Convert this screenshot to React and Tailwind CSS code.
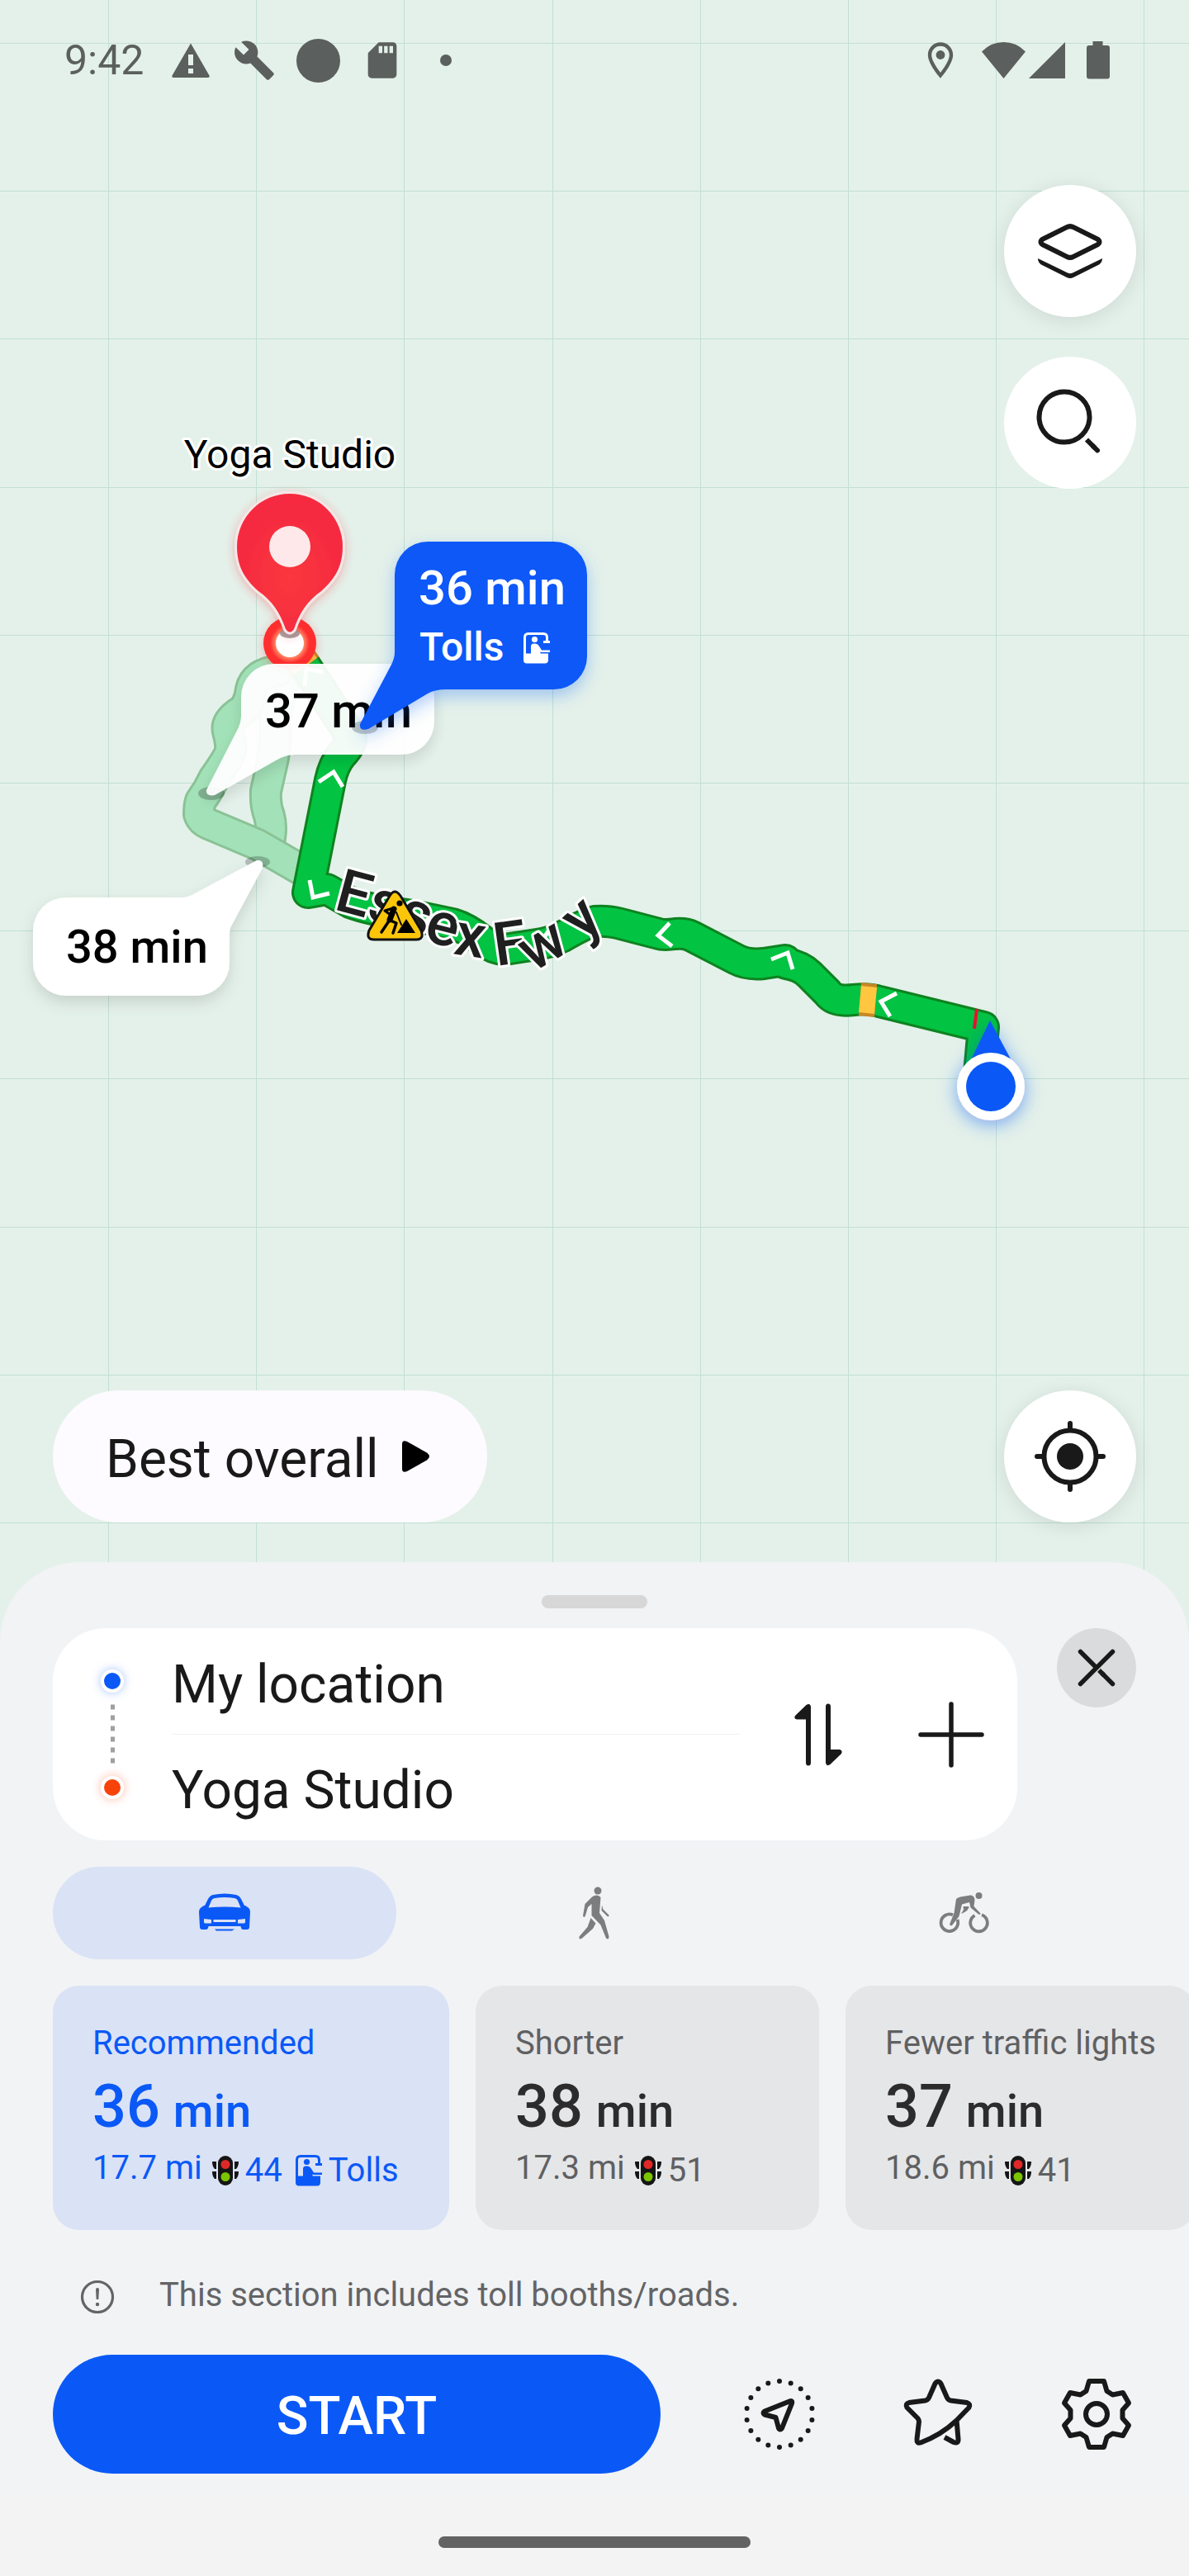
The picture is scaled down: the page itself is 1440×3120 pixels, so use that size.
import React from "react";
import { MdBuild, MdSdCard, MdOutlineLocationOn } from "react-icons/md";

const INK = "#191919";

/* ---------- Status bar ---------- */

function StatusBar() {
  return (
    <header className="flex h-[146px] items-center justify-between pr-24 pl-[78px] text-[#5b5f5d]">
      <div className="flex items-center gap-[25px]">
        <time className="mr-1.5 text-[50px] leading-none">9:42</time>
        <svg viewBox="0 0 52 52" className="size-[52px]" aria-label="Warning">
          <path d="M26 5.500 L48.500 44.500 Q49 47 47 47 H5 Q3 47 3.500 44.500 Z" fill="currentColor" />
          <path d="M23 19h6v13h-6zM23 36h6v6h-6z" fill="#e4f1ea" />
        </svg>
        <MdBuild className="size-[52px]" aria-label="Tools" />
        <span className="size-[53px] rounded-full bg-[#5b5f5d]" />
        <MdSdCard className="size-[52px]" aria-label="Storage" />
        <span className="flex w-[52px] justify-center">
          <span className="size-[14px] rounded-full bg-[#5b5f5d]" />
        </span>
      </div>
      <div className="flex items-center">
        <MdOutlineLocationOn className="mr-6 size-[52px]" aria-label="Location in use" />
        <svg viewBox="0 0 53 46" className="mr-1 h-[46px] w-[53px]" aria-label="Wi-Fi">
          <path d="M26.500 45 L0 12.500 Q11 1 26.500 1 T53 12.500 Z" fill="currentColor" />
        </svg>
        <svg viewBox="0 0 46 46" className="mr-6 h-[46px] w-[46px]" aria-label="Signal">
          <path d="M0 45 L44 1 V45 Z" fill="currentColor" />
        </svg>
        <svg viewBox="0 0 28 46" className="h-[46px] w-[28px]" aria-label="Battery">
          <path d="M7.500 0h12v5h5.500q3 0 3 3v34.500q0 3-3 3H3q-3 0-3-3V8q0-3 3-3h4.500z" fill="currentColor" />
        </svg>
      </div>
    </header>
  );
}

/* ---------- Map ---------- */

const V_LINES = [0, 1, 2, 3, 4, 5, 6, 7].map((i) => Math.round(131 + i * 179.2));
const H_LINES = Array.from({ length: 12 }, (_, i) => Math.round(52 + i * 179.2));

const MAIN_ROUTE =
  "M1186 1300 L1191 1244 L1065 1213 Q1052 1209 1034 1211 Q1010 1214 1002 1202 L980 1180 Q970 1170 952 1167 L951 1163 L925 1167 Q905 1169 892 1162 L838 1134 Q830 1130 818 1131 Q804 1133 798 1131 L748 1118 Q736 1115 720 1116 Q712 1117 680 1135 Q665 1142 650 1144 L611 1150 Q598 1150 584 1139 Q565 1124 548 1119 L500 1109 Q450 1103 424 1093 L396 1077 L373 1081 L400 945 Q404 926 414 914 Q426 902 425 891 L370 807 L354 785";

const ALT_OUTER =
  "M351 785 L336 812 Q308 816 304 835 Q301 856 291 862 Q273 874 276 886 Q280 900 279 910 Q277 917 259 943 Q252 958 243 970 Q241 976 241 986 Q244 995 255 999 L312 1023 L376 1060";

const ALT_INNER = "M350 790 Q343 830 333 868 Q334 900 331 918 L322 958 Q321 975 326 988 Q330 1002 326 1020";

const CHEVRONS = [
  "386,947 404,935 415,953",
  "375,1066 379,1087 399,1082",
  "369,831 371,810 391,814",
  "811,1118 797,1133 814,1146",
  "531,1105 515,1116 528,1130",
  "666,1125 654,1143 672,1152",
  "934,1162 954,1154 960,1174",
  "1086,1203 1067,1213 1078,1231",
];

function Casing({ d, edge, fill }) {
  return (
    <g fill="none" strokeLinejoin="round">
      <path d={d} stroke={edge} strokeWidth="40" />
      <path d={d} stroke={fill} strokeWidth="34" />
    </g>
  );
}

function TollGlyph() {
  return (
    <g>
      <path
        d="M1.500 26 V6 Q1.500 1.500 6 1.500 H24 Q28.500 1.500 28.500 6 V10.500 M24 11.500 H32"
        fill="none"
        stroke="currentColor"
        strokeWidth="3"
      />
      <circle cx="13.500" cy="8.500" r="3.600" fill="currentColor" />
      <path
        d="M0 25.500 H9 V17 Q9 13.500 12.500 13.500 H14.500 Q17 13.500 18.500 16 L22 21.500 H32 V24 H22 L20.500 23.500 V25.500 H30 V33 Q30 37.500 26 37.500 H4 Q0 37.500 0 33.500 Z"
        fill="currentColor"
      />
    </g>
  );
}

function MapCanvas() {
  return (
    <svg
      viewBox="0 0 1440 3120"
      preserveAspectRatio="xMidYMin slice"
      className="absolute inset-0 h-full w-full"
      role="img"
      aria-label="Route map"
    >
      <defs>
        <filter id="soft" x="-30%" y="-30%" width="160%" height="170%">
          <feDropShadow dx="0" dy="8" stdDeviation="9" floodColor="#000" floodOpacity="0.13" />
        </filter>
        <filter id="softBlue" x="-30%" y="-30%" width="160%" height="170%">
          <feDropShadow dx="0" dy="8" stdDeviation="10" floodColor="#0a59f7" floodOpacity="0.3" />
        </filter>
        <filter id="glowBlue" x="-60%" y="-60%" width="220%" height="220%">
          <feDropShadow dx="0" dy="5" stdDeviation="11" floodColor="#0a59f7" floodOpacity="0.5" />
        </filter>
        <filter id="glowRed" x="-40%" y="-40%" width="180%" height="180%">
          <feDropShadow dx="0" dy="3" stdDeviation="6" floodColor="#f5303a" floodOpacity="0.35" />
        </filter>
        <radialGradient id="ring">
          <stop offset="0.52" stopColor="#ff8f6b" />
          <stop offset="0.75" stopColor="#ff2d2d" />
        </radialGradient>
        <radialGradient id="pin" cx="0.5" cy="0.6" r="0.45">
          <stop offset="0" stopColor="#fb373e" />
          <stop offset="1" stopColor="#f52b3f" />
        </radialGradient>
      </defs>

      <g fill="#c1dfd3">
        {V_LINES.map((x) => (
          <rect key={x} x={x} y="0" width="1" height="3120" />
        ))}
        {H_LINES.map((y) => (
          <rect key={y} x="0" y={y} width="1440" height="1" />
        ))}
      </g>

      <Casing d={ALT_INNER} edge="#8ac295" fill="#a3e2b9" />
      <Casing d={ALT_OUTER} edge="#8ac295" fill="#a3e2b9" />
      <Casing d={MAIN_ROUTE} edge="#0f8220" fill="#02c342" />

      <path d="M370 807 L354 785" stroke="#c98726" strokeWidth="40" />
      <path d="M370 807 L354 785" stroke="#ffc640" strokeWidth="34" />
      <path d="M1043 1190 L1062 1192 L1059 1232 L1040 1230 Z" fill="#c98726" />
      <path d="M1043 1194 L1062 1196 L1059 1228 L1040 1226 Z" fill="#ffc640" />
      <path d="M1183 1222 L1180 1246" stroke="#e81130" strokeWidth="4" />
      <g fill="none" stroke="#fff" strokeWidth="5">
        {CHEVRONS.map((p) => (
          <polyline key={p} points={p} />
        ))}
      </g>

      <text
        x="403 442 479 512 548 585 601 645 706"
        y="1101 1112 1124 1139 1155 1165 1170 1178 1141"
        rotate="15 17 19 14 9 0 -8 -30 -42"
        fontSize="73"
        fontWeight="500"
        fill="#1f1f1f"
        stroke="#fff"
        strokeWidth="6"
        strokeLinejoin="round"
        paintOrder="stroke"
      >
        Essex Fwy
      </text>

      {/* Road works */}
      <g>
        <path
          d="M472 1085 Q478 1075 485 1085 L510 1127 Q514 1138 504 1138 H453 Q443 1138 447 1127 Z"
          fill="#fbc60a"
          stroke="#111"
          strokeWidth="3"
        />
        <circle cx="484" cy="1094" r="3.600" />
        <path d="M481 1130 L492 1113 L503 1130 Z" />
        <g fill="none" stroke="#000" strokeLinecap="round" strokeLinejoin="round">
          <path d="M477 1101 L472 1114" strokeWidth="7" />
          <path d="M476 1100 L466 1103 L473 1108" strokeWidth="3" />
          <path d="M472 1114 L462 1129 M473 1115 L480 1118 L476 1130" strokeWidth="3.500" />
          <path d="M480 1105 L486 1120" strokeWidth="2" />
        </g>
      </g>

      {/* Destination ring and pin */}
      <g filter="url(#glowRed)">
        <circle cx="351" cy="779" r="32" fill="url(#ring)" />
        <circle cx="351" cy="779" r="17" fill="#fff" />
      </g>
      <ellipse cx="351" cy="767" rx="12" ry="6" fill="#8a8a8a" opacity="0.8" />
      <g filter="url(#glowRed)">
        <path
          d="M287 662 A64 64 0 0 1 415 662 C415 690 402 704 389 716 C372 728 363 742 356 762 Q351 769 346 762 C339 742 330 728 313 716 C300 704 287 690 287 662 Z"
          fill="url(#pin)"
          stroke="#f6e6e6"
          strokeWidth="6"
          paintOrder="stroke"
        />
      </g>
      <circle cx="351" cy="662" r="25" fill="#ffe8ea" />
      <text
        x="351"
        y="567"
        textAnchor="middle"
        fontSize="48"
        stroke="#fff"
        strokeWidth="6"
        strokeLinejoin="round"
        paintOrder="stroke"
      >
        Yoga Studio
      </text>

      {/* Travel-time callouts */}
      <ellipse cx="256" cy="961" rx="16" ry="8" opacity="0.22" />
      <g filter="url(#soft)" opacity="0.95">
        <path
          d="M332 804 H486 A40 40 0 0 1 526 844 V874 A40 40 0 0 1 486 914 H356 Q346 914 334 921 L260 963 Q249 965 250 957 L289 881 Q292 874 292 868 V844 A40 40 0 0 1 332 804 Z"
          fill="#fff"
        />
      </g>
      <text x="321" y="881" fontSize="58" fontWeight="500">
        37 min
      </text>
      <ellipse cx="312" cy="1044" rx="15" ry="7" opacity="0.22" />
      <g filter="url(#soft)">
        <path
          d="M80 1087 H220 Q228 1087 238 1081 L311 1042 Q320 1041 318 1051 L282 1118 Q278 1124 278 1130 V1166 A40 40 0 0 1 238 1206 H80 A40 40 0 0 1 40 1166 V1127 A40 40 0 0 1 80 1087 Z"
          fill="#fff"
        />
      </g>
      <text x="80" y="1166" fontSize="56" fontWeight="500">
        38 min
      </text>
      <ellipse cx="442" cy="881" rx="16" ry="8" opacity="0.22" />
      <g filter="url(#softBlue)">
        <path
          d="M518 656 H671 A40 40 0 0 1 711 696 V795 A40 40 0 0 1 671 835 H540 Q527 835 518 840 L446 883 Q435 886 436 877 L474 805 Q478 797 478 790 V696 A40 40 0 0 1 518 656 Z"
          fill="#0a59f7"
        />
      </g>
      <g fill="#fff" fontWeight="500">
        <text x="507" y="732" fontSize="58">
          36 min
        </text>
        <text x="508" y="800" fontSize="48">
          Tolls
        </text>
      </g>
      <g transform="translate(634 766)" color="#fff">
        <TollGlyph />
      </g>

      {/* Current position */}
      <g filter="url(#glowBlue)">
        <path d="M1199 1236 L1229 1292 H1172 Z" fill="#0a59f7" />
        <circle cx="1200" cy="1316" r="41" fill="#fff" />
      </g>
      <circle cx="1200" cy="1316" r="30" fill="#0a59f7" />
    </svg>
  );
}

/* ---------- Icons ---------- */

function Icon({ children, label }) {
  return (
    <svg viewBox="0 0 96 96" className="size-24" fill="none" stroke={INK} strokeWidth="6" aria-label={label}>
      {children}
    </svg>
  );
}

function LayersIcon() {
  return (
    <Icon>
      <path d="M44 19.200 Q48 17 52 19.200 L81 33.500 Q86 37 81 40.500 L52 54.800 Q48 57 44 54.800 L15 40.500 Q10 37 15 33.500 Z" />
      <path
        d="M9 57 L45 74.500 Q48 76 51 74.500 L87 57 Q87 62 83 64.500 L52 80 Q48 82 44 80 L13 64.500 Q9 62 9 57 Z"
        fill={INK}
        stroke="none"
      />
    </Icon>
  );
}

function SearchIcon() {
  return (
    <Icon>
      <circle cx="41" cy="41" r="30.500" />
      <path d="M68 68.500 L78 78.500" />
      <path d="M76 76.500 L81 81.500" strokeLinecap="round" />
    </Icon>
  );
}

function LocateIcon() {
  return (
    <Icon>
      <circle cx="48" cy="48" r="31.500" />
      <circle cx="48" cy="48" r="16" fill={INK} stroke="none" />
      <path d="M48 8v8M48 80v8M8 48h8M80 48h8" strokeLinecap="round" />
    </Icon>
  );
}

function CruiseIcon() {
  const dots = Array.from({ length: 18 }, (_, i) => (i * Math.PI) / 9);
  return (
    <Icon>
      {dots.map((a) => (
        <circle key={a} cx={48 + 40 * Math.sin(a)} cy={48 - 40 * Math.cos(a)} r="3" fill={INK} stroke="none" />
      ))}
      <path d="M60 32.500 Q64 31 63 35 L51 65 Q48.500 68 47 65 L43.500 52 L30 48.500 Q27 46.500 30 44.500 Z" strokeLinejoin="round" />
    </Icon>
  );
}

function StarIcon() {
  return (
    <Icon>
      <path
        d="M56 76 L67 82 Q73 84 72.500 78 L70.500 55 M44.500 11 Q48 6 51.500 11 L59 28 Q60.500 31 63.500 31.500 L83 34 Q88 36 85.500 40 L70 56 Q52 73 27 82.500 Q22 84 22.500 78 L25 57 Q25 55 23.500 53 L10.500 40 Q8 35.500 13 34 L32.500 31.500 Q35.500 31 37 28 Z"
        strokeLinejoin="round"
      />
    </Icon>
  );
}

function GearIcon() {
  return (
    <Icon>
      <polygon
        points="39,8 57,8 60.500,20 67.500,24.500 80,22 87,34.500 79.500,43 79.500,53 87,61.500 80,74 67.500,71.500 60.500,76 57,88 39,88 35.500,76 28.500,71.500 16,74 9,61.500 16.500,53 16.500,43 9,34.500 16,22 28.500,24.500 35.500,20"
        strokeLinejoin="round"
      />
      <circle cx="48" cy="48" r="13" />
    </Icon>
  );
}

function CloseIcon() {
  return (
    <svg viewBox="0 0 48 48" className="size-12" stroke={INK} strokeWidth="5.500" strokeLinecap="round" aria-hidden="true">
      <path d="M4.500 43.500 L43.500 4.500 M4.500 4.500 L23 23 M43.500 43.500 L31 31" />
      <path d="M27 27 L33 33" strokeLinecap="butt" />
    </svg>
  );
}

function SwapIcon() {
  return (
    <svg viewBox="0 0 58 76" className="h-[76px] w-[58px]" fill={INK} aria-hidden="true">
      <path d="M20 72 Q20 75.500 17 75.500 Q14 75.500 14 72 V19.500 H3 Q-1 19 1 15 L14.500 2 Q19 -1 20 4 Z" />
      <path d="M38 4 Q38 .5 41 .5 Q44 .5 44 4 V56 H55 Q59 57 57 61 L43.500 74 Q39 77 38 72 Z" />
    </svg>
  );
}

function PlusIcon() {
  return (
    <svg viewBox="0 0 80 80" className="size-20" stroke={INK} strokeWidth="5.500" strokeLinecap="round" aria-hidden="true">
      <path d="M3 40 H77 M40 3 V77" />
    </svg>
  );
}

function CarIcon() {
  return (
    <svg viewBox="0 0 64 52" className="h-[52px] w-16" fill="currentColor" aria-hidden="true">
      <path
        fillRule="evenodd"
        d="M18 4 Q32 1 46 4 Q50 5 52 9 L56 17 Q58 16.500 59 18.500 Q63 20 63 25 L62 43 Q62 46 59 46 H54.500 Q52 46 51.500 42 H12.500 Q12 46 9.500 46 H5 Q2 46 2 43 L1 25 Q1 20 5 18.500 Q6 16.500 8 17 L12 9 Q14 5 18 4 Z M12.500 19.500 Q32 17.500 51.500 19.500 L48 11 Q47 8.500 44 8 Q32 6 20 8 Q17 8.500 16 11 Z M7 33 V37 Q7 38.500 9 38.500 H16 V34 Z M57 33 V37 Q57 38.500 55 38.500 H48 V34 Z M18.500 34 H45.500 V37 H18.500 Z"
      />
      <path d="M20 45.500 H44 L41 47.500 H22 Z" />
    </svg>
  );
}

function WalkIcon() {
  return (
    <svg viewBox="0 0 40 68" className="h-[68px] w-10" fill="currentColor" aria-hidden="true">
      <circle cx="24" cy="7" r="4.500" />
      <path d="M17 14.500 Q23 10.500 27.500 15 L26 34 L32 43 L37.500 62.500 Q37.500 67 34 64.500 L27.500 48.500 L16.500 37 L16.500 23 L12 27 L9 37 Q7.500 40.500 6 37.500 L8.500 23 Z" />
      <path d="M15.500 40 L21.500 46.500 L18 53 L5 64.500 Q1 67 1.500 62.500 L11.500 51 Z" />
      <path d="M29 24.500 L30.500 29.500 L37.500 36.500 Q38 39 35.500 38 L28.500 31 Z" />
    </svg>
  );
}

function BikeIcon() {
  return (
    <svg viewBox="0 0 64 54" className="h-[54px] w-16" fill="currentColor" aria-hidden="true">
      <circle cx="49.500" cy="6" r="4" />
      <path d="M18 29.300 A10.300 10.300 0 1 0 23.500 35 M44.500 30 A10.300 10.300 0 1 0 53 29.300" fill="none" stroke="currentColor" strokeWidth="3.800" />
      <path d="M22 10 Q24 8 27 7.500 L39 5.500 Q44 5.500 44.500 11 L43.500 19 L51.500 27.500 Q51.500 29.500 49 28.500 L39.500 20.500 L38 14 L29 16.500 L25.500 31 L17 42 Q13.500 43 14.500 39.500 L19.500 27 Z" />
      <path d="M30.500 19 H37.500 Q38 24 28 28 L31 23 Z" />
    </svg>
  );
}

function TrafficLightIcon() {
  return (
    <svg viewBox="0 0 32 36" className="h-9 w-8" aria-hidden="true">
      <path d="M0 7h5v9h-2q-3-3-3-9zM0 19h5v9h-2q-3-3-3-9zM32 7h-5v9h2q3-3 3-9zM32 19h-5v9h2q3-3 3-9z" fill="#151515" />
      <rect x="7" y="0" width="18" height="36" rx="9" fill="#151515" />
      <circle cx="16" cy="10.500" r="5.500" fill="#e02828" />
      <circle cx="16" cy="25.500" r="5.500" fill="#7ac400" />
    </svg>
  );
}

function TollIcon() {
  return (
    <svg viewBox="0 0 32 38" className="h-[38px] w-8" aria-hidden="true">
      <TollGlyph />
    </svg>
  );
}

/* ---------- Controls ---------- */

function RoundButton({ label, flat, children }) {
  return (
    <button
      type="button"
      aria-label={label}
      className={
        flat
          ? "flex size-40 items-center justify-center rounded-full bg-white"
          : "flex size-40 items-center justify-center rounded-full bg-white shadow-[0_4px_24px_rgba(0,0,0,0.1)]"
      }
    >
      {children}
    </button>
  );
}

const ROUTES = [
  { name: "Recommended", time: "36", distance: "17.7 mi", lights: "44", tolls: true, active: true },
  { name: "Shorter", time: "38", distance: "17.3 mi", lights: "51" },
  { name: "Fewer traffic lights", time: "37", distance: "18.6 mi", lights: "41" },
];

function RouteCard({ name, time, distance, lights, tolls, active }) {
  return (
    <button
      type="button"
      aria-pressed={!!active}
      className={
        active
          ? "flex h-[296px] min-w-[480px] shrink-0 flex-col items-start rounded-[32px] bg-[#dae2f5] px-12 pt-[45px] text-[40px] whitespace-nowrap text-[#0a59f7]"
          : "flex h-[296px] min-w-[416px] shrink-0 flex-col items-start rounded-[32px] bg-[#e5e6e8] px-12 pt-[45px] text-[40px] whitespace-nowrap text-[#5f6062]"
      }
    >
      <span className="leading-[50px]">{name}</span>
      <span
        className={
          active
            ? "flex h-[104px] items-baseline gap-4 font-medium"
            : "flex h-[104px] items-baseline gap-4 font-medium text-[#2c2c2d]"
        }
      >
        <span className="text-[72px] leading-[104px]">{time}</span>
        <span className="text-[56px] leading-none">min</span>
      </span>
      <span className="flex items-start">
        <span className="mr-3 leading-[44px]">{distance}</span>
        <span className="flex items-center gap-2 leading-[50px]">
          <TrafficLightIcon />
          {lights}
        </span>
        {tolls && (
          <span className="ml-4 flex items-center gap-2 leading-[50px]">
            <TollIcon />
            Tolls
          </span>
        )}
      </span>
    </button>
  );
}

function Waypoints() {
  return (
    <div className="flex h-[257px] flex-1 items-center rounded-[64px] bg-white pr-10">
      <div className="flex w-36 flex-col items-center">
        <span className="size-7 rounded-full border-4 border-white bg-[#0a59f7] shadow-[0_0_12px_rgba(10,89,247,0.35)]" />
        <svg viewBox="0 0 5 101" className="h-[101px] w-[5px]" aria-hidden="true">
          <path d="M2.500 14.500 V86" stroke="#a0a0a0" strokeWidth="5" strokeDasharray="6 7" />
        </svg>
        <span className="size-7 rounded-full border-4 border-white bg-[#f7430a] shadow-[0_0_12px_rgba(247,67,10,0.35)]" />
      </div>
      <div className="flex min-w-0 flex-1 flex-col text-[64px] text-[#191919]">
        <input
          aria-label="Start"
          defaultValue="My location"
          className="h-32 w-full border-b border-[#f1f1f1] bg-transparent pt-2 outline-none"
        />
        <input aria-label="Destination" defaultValue="Yoga Studio" className="h-32 w-full bg-transparent pt-2 outline-none" />
      </div>
      <button type="button" aria-label="Swap start and destination" className="ml-[66px] flex">
        <SwapIcon />
      </button>
      <button type="button" aria-label="Add stop" className="ml-[92px] flex">
        <PlusIcon />
      </button>
    </div>
  );
}

export default function App() {
  return (
    <div className="relative flex min-h-screen flex-col overflow-hidden bg-[#e4f1ea] font-['Roboto',sans-serif]">
      <MapCanvas />
      <div className="relative flex flex-1 flex-col">
        <StatusBar />
        <div className="mt-[78px] flex min-h-[1000px] flex-1 flex-col items-end gap-12 px-16">
          <RoundButton label="Map layers">
            <LayersIcon />
          </RoundButton>
          <RoundButton label="Search" flat>
            <SearchIcon />
          </RoundButton>
        </div>
        <div className="flex items-center justify-between px-16 pb-12">
          <button
            type="button"
            className="flex h-40 items-center rounded-full bg-[#fdfbff] pr-[70px] pl-16 text-[64px] text-[#191919]"
          >
            <span className="pt-2">Best overall</span>
            <svg viewBox="0 0 33 38" className="ml-7 h-[38px] w-[33px]" aria-hidden="true">
              <path d="M0 4 Q0 -1.500 6 1 L30 14.500 Q36 19 30 23.500 L6 37 Q0 39.500 0 34 Z" />
            </svg>
          </button>
          <RoundButton label="My position">
            <LocateIcon />
          </RoundButton>
        </div>
      </div>

      <section className="relative flex flex-col rounded-t-[96px] bg-[#f1f3f5] pt-10" aria-label="Directions">
        <div className="mx-auto h-4 w-32 rounded-full bg-[#d7d7d8]" />
        <div className="mt-6 flex items-start gap-12 px-16">
          <Waypoints />
          <button
            type="button"
            aria-label="Close"
            className="flex size-24 shrink-0 items-center justify-center rounded-full bg-[#dadbdd]"
          >
            <CloseIcon />
          </button>
        </div>
        <nav className="mt-8 grid grid-cols-3 gap-8 px-16" aria-label="Travel mode">
          <button
            type="button"
            aria-label="Drive"
            className="flex h-28 items-center justify-center rounded-full bg-[#dae2f5] text-[#0a59f7]"
          >
            <CarIcon />
          </button>
          <button type="button" aria-label="Walk" className="flex h-28 items-center justify-center rounded-full text-[#7c7d7f]">
            <WalkIcon />
          </button>
          <button type="button" aria-label="Cycle" className="flex h-28 items-center justify-center rounded-full text-[#7c7d7f]">
            <BikeIcon />
          </button>
        </nav>
        <div className="mt-8 flex gap-8 overflow-x-auto px-16 [scrollbar-width:none]">
          {ROUTES.map((route) => (
            <RouteCard key={route.name} {...route} />
          ))}
        </div>
        <p className="flex h-[151px] items-center gap-[53px] px-24 pt-1.5 text-[40px] text-[#636466]">
          <svg viewBox="0 0 44 44" className="size-11 shrink-0" aria-hidden="true">
            <circle cx="22" cy="24" r="18.500" fill="none" stroke="currentColor" strokeWidth="3.200" />
            <path d="M20 15 Q20 13 22 13 Q24 13 24 15 L23.300 27 H20.700 Z" fill="currentColor" />
            <circle cx="22" cy="33" r="2.200" fill="currentColor" />
          </svg>
          This section includes toll booths/roads.
        </p>
        <div className="flex items-center gap-24 px-16">
          <button
            type="button"
            className="h-36 flex-1 rounded-full bg-[#0a59f7] pt-1.5 text-[64px] font-medium text-white"
          >
            START
          </button>
          <button type="button" aria-label="Cruise">
            <CruiseIcon />
          </button>
          <button type="button" aria-label="Save">
            <StarIcon />
          </button>
          <button type="button" aria-label="Settings">
            <GearIcon />
          </button>
        </div>
        <div className="mt-7 flex h-24 justify-center bg-[#f3f3f3] pt-12">
          <div className="h-[14px] w-[378px] rounded-full bg-[#636363]" />
        </div>
      </section>
    </div>
  );
}
